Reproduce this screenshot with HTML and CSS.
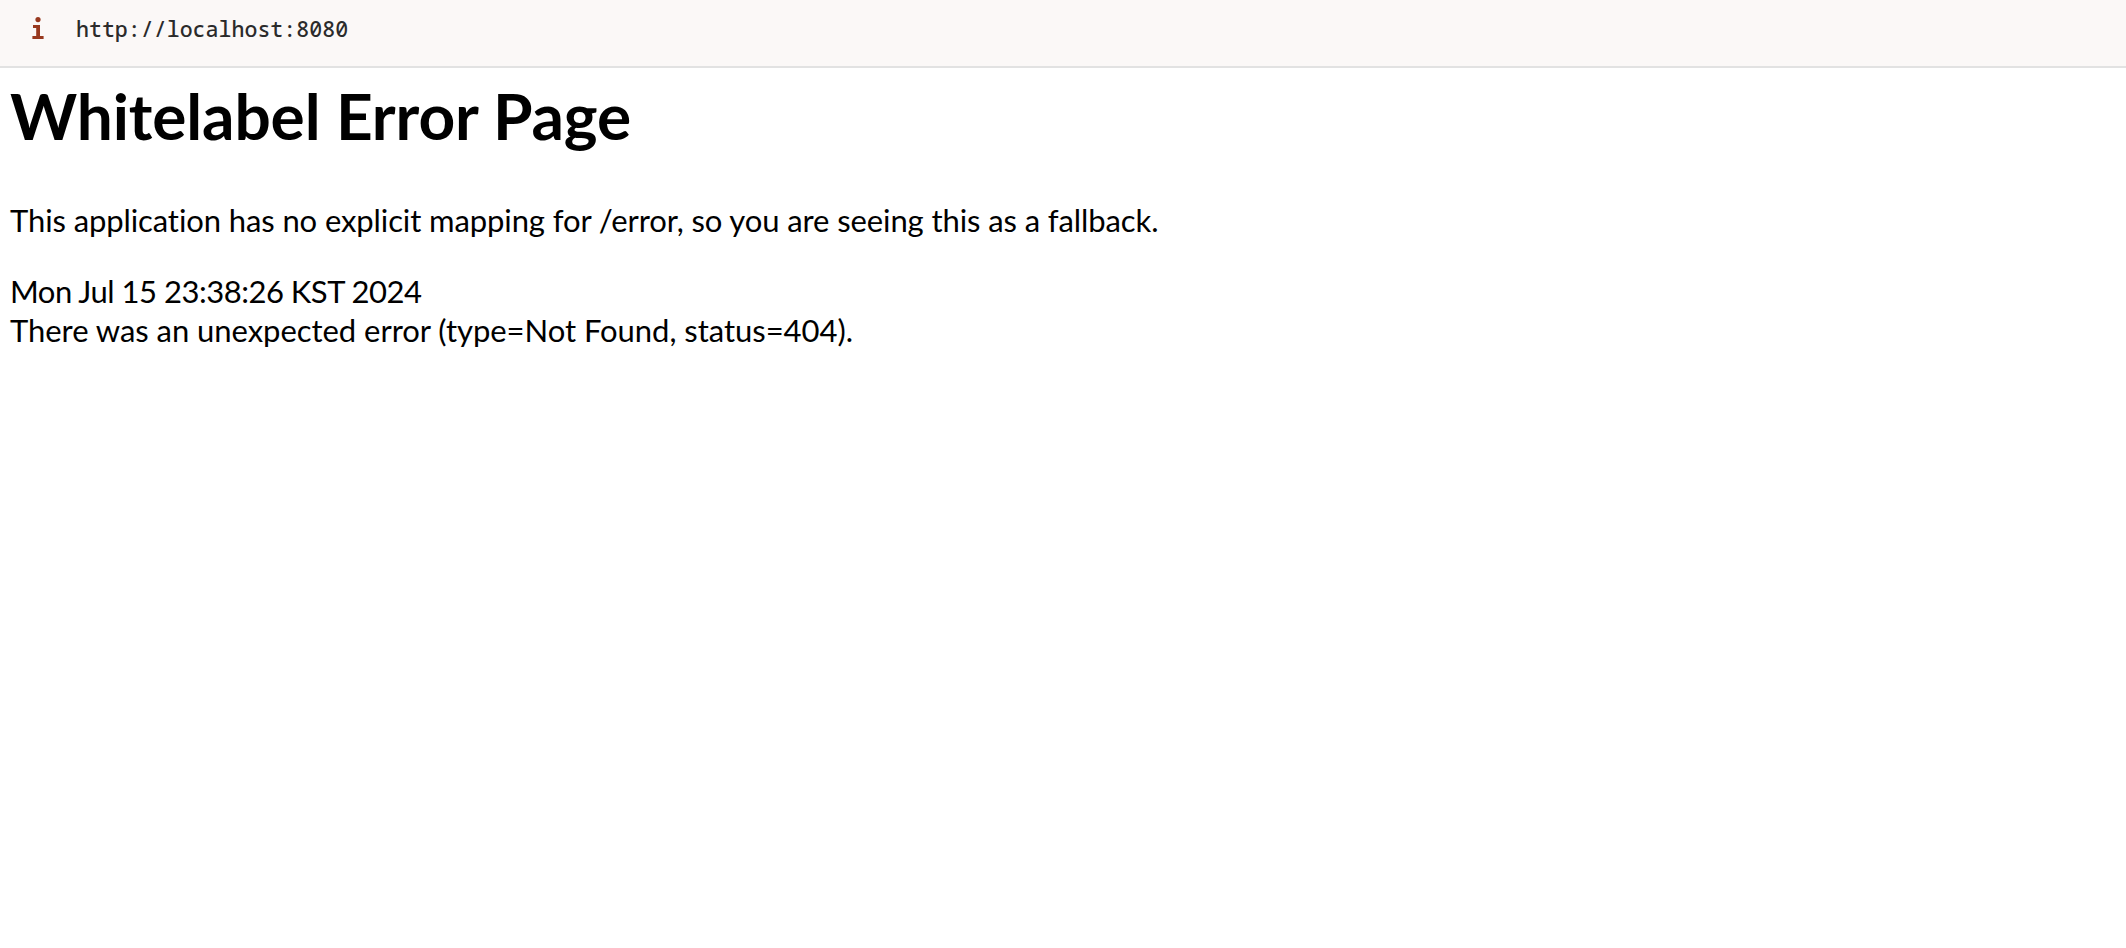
FILE: index.html
```html
<!DOCTYPE html>
<html>
<head>
<meta charset="utf-8">
<title>Error</title>
<link rel="stylesheet" href="styles.css">
</head>
<body>
<div class="bar">
  <svg class="info" viewBox="0 0 12 22" width="12" height="22" aria-hidden="true">
    <circle cx="6" cy="2.6" r="2.6"/>
    <path d="M1 8h7v11h3.6v3H.4v-3H4.2v-8H1z"/>
  </svg>
  <span class="url">http://localhost:8080</span>
</div>
<main class="content">
  <h1 class="title">Whitelabel Error Page</h1>
  <p class="lead">This application has no explicit mapping for /error, so you are seeing this as a fallback.</p>
  <div class="line stamp">Mon Jul 15 23:38:26 KST 2024</div>
  <div class="line detail">There was an unexpected error (type=Not Found, status=404).</div>
</main>
</body>
</html>
```
FILE: styles.css
```css
html, body { margin: 0; padding: 0; background: #fff; }
body { font-family: "Lato", "Noto Sans", sans-serif; color: #000; font-variant-ligatures: none; }
.bar { display: flex; align-items: flex-start; box-sizing: border-box; height: 68px; padding: 17px 0 0 32px; background: #fbf8f7; border-bottom: 2px solid #e2e2e2; }
.info { fill: #98391f; flex: none; margin-right: 32px; }
.url { font-family: "Noto Sans Mono", "DejaVu Sans Mono", monospace; font-size: 21.6px; font-weight: 500; line-height: 24px; color: #2b2b2b; }
.content { padding: 0 10px; }
.title { font-size: 64px; font-weight: 700; letter-spacing: -0.12px; line-height: 96px; margin: 0; }
.lead { font-size: 31px; letter-spacing: -0.1px; line-height: 39px; margin: 37px 0 32px; }
.line { font-size: 31px; line-height: 39px; }
.stamp { letter-spacing: -0.49px; }
.detail { letter-spacing: -0.04px; }
```
